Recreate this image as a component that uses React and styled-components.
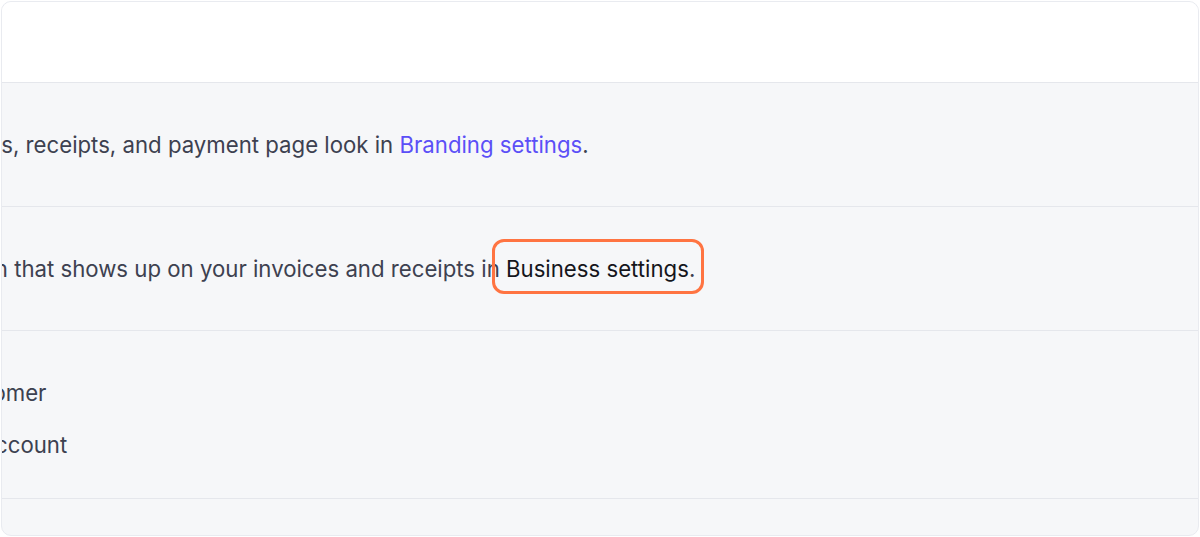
import React, { useLayoutEffect, useRef, useState } from "react";
import styled, { createGlobalStyle } from "styled-components";

const GlobalStyle = createGlobalStyle`
  html, body {
    margin: 0;
    padding: 0;
    background: #ffffff;
  }
  body {
    font-family: Inter, "Noto Sans", "Liberation Sans", sans-serif;
    -webkit-font-smoothing: antialiased;
  }
`;

// Rounded card holding the settings rows
const Frame = styled.div`
  box-sizing: border-box;
  margin: 1px 2px 0 1px;
  width: 1198px;
  height: 535px;
  border: 1px solid #e9ebf0;
  border-radius: 10px;
  overflow: hidden;
  display: flex;
  flex-direction: column;
  background: #f6f7f9;
`;

const Header = styled.div`
  height: 80px;
  flex: none;
  background: #ffffff;
  border-bottom: 1px solid #e5e7ec;
`;

const Section = styled.section`
  flex: none;
  box-sizing: border-box;
  height: ${(p) => p.$height}px;
  border-bottom: 1px solid #e5e7ec;
  display: flex;
  flex-direction: column;
  justify-content: ${(p) => (p.$top ? "flex-start" : "center")};
  padding-top: ${(p) => p.$top || 0}px;
  gap: 24px;
`;

const Footer = styled.div`
  flex: 1;
`;

const Line = styled.p`
  margin: 0;
  white-space: nowrap;
  font-size: 22.2px;
  line-height: 28px;
  color: #3d4150;
  letter-spacing: 0;
`;

const Link = styled.a`
  color: #5b4ff7;
  text-decoration: none;
`;

const Strong = styled.span`
  position: relative;
  color: #15161c;
`;

// Orange callout ring drawn over the highlighted text
const Ring = styled.span`
  position: absolute;
  left: -14px;
  right: -15px;
  top: -16px;
  bottom: -12px;
  border: 3px solid #ff7442;
  border-radius: 12px;
  pointer-events: none;
`;

// Row text is wider than the card; the lead-in runs off the left edge.
// `at` is where the visible part should start, so the lead is measured.
function CutLine({ lead, at, children }) {
  const ref = useRef(null);
  const [shift, setShift] = useState(0);

  useLayoutEffect(() => {
    if (ref.current) setShift(ref.current.offsetWidth);
  }, [lead]);

  return (
    <Line style={{ marginLeft: at - shift }}>
      <span ref={ref}>{lead}</span>
      {children}
    </Line>
  );
}

export default function App() {
  return (
    <>
      <GlobalStyle />
      <Frame>
        <Header />
        <Section $height={124}>
          <CutLine lead="Customize how your invoice" at={-1}>
            s, receipts, and payment page look in{" "}
            <Link href="#branding">Branding settings</Link>.
          </CutLine>
        </Section>
        <Section $height={124}>
          <CutLine lead="Manage the business information " at={12}>
            that shows up on your invoices and receipts in{" "}
            <Strong>
              Business settings
              <Ring />
            </Strong>
            .
          </CutLine>
        </Section>
        <Section $height={168} $top={48}>
          <CutLine lead="Email receipts to the custo" at={4}>
            mer
          </CutLine>
          <CutLine lead="Show invoice history in the ac" at={6}>
            count
          </CutLine>
        </Section>
        <Footer />
      </Frame>
    </>
  );
}
